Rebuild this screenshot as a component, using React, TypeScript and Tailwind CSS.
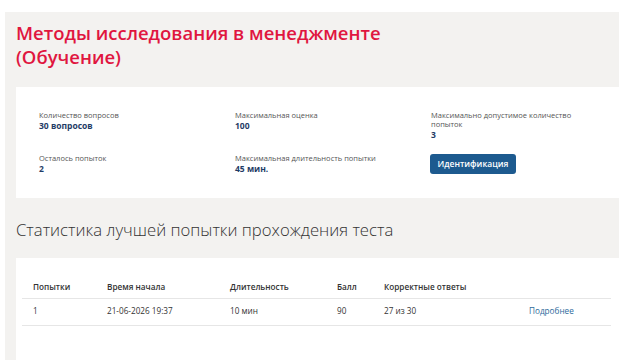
const info = [
  { label: "Количество вопросов", value: "30 вопросов" },
  { label: "Максимальная оценка", value: "100" },
  { label: "Максимально допустимое количество попыток", value: "3" },
];

const info2 = [
  { label: "Осталось попыток", value: "2" },
  { label: "Максимальная длительность попытки", value: "45 мин." },
];

const App = () => {
  return (
    <div className="bg-white pt-[12px] pl-[5px] h-[360px] overflow-hidden font-['Open_Sans',sans-serif]">
      <div className="bg-[#f3f2f0] pl-[11px] h-[348px]">
        <h1 className="pt-[9px] text-[18.5px] leading-[24px] font-semibold text-[#e0163f]">
          Методы исследования в менеджменте
          <br />
          (Обучение)
        </h1>

        <div className="mt-[18px] bg-white h-[111px] pl-[23px] pt-[24px]">
          <div className="flex">
            {info.map((item) => (
              <div className="w-[196px] shrink-0 pr-[50px]" key={item.label}>
                <p className="text-[7.5px] leading-[9px] text-[#555]">{item.label}</p>
                <p className="text-[8.5px] leading-[11px] font-bold text-[#1f3c66]">{item.value}</p>
              </div>
            ))}
          </div>
          <div className="flex mt-[14px]">
            {info2.map((item) => (
              <div className="w-[196px] shrink-0" key={item.label}>
                <p className="text-[7.5px] leading-[9px] text-[#555]">{item.label}</p>
                <p className="text-[8.5px] leading-[11px] font-bold text-[#1f3c66]">{item.value}</p>
              </div>
            ))}
            <button className="-ml-[1px] h-[20px] w-[86px] shrink-0 rounded-[3px] bg-[#1d5a8f] text-white text-[8.5px] font-semibold">
              Идентификация
            </button>
          </div>
        </div>

        <h2 className="mt-[20px] text-[16.7px] leading-[24px] font-light text-[#333]">
          Статистика лучшей попытки прохождения теста
        </h2>

        <div className="mt-[16px] bg-white h-[120px] pl-[6px] pr-[8px] pt-[21px]">
          <table className="w-full table-fixed text-[8.2px] text-[#333] border-collapse">
            <thead>
              <tr className="border-b border-[#e6e6e6]">
                <th className="text-left font-semibold pl-[11px] w-[85px] h-[19px] pb-[3px]">Попытки</th>
                <th className="text-left font-semibold w-[123px] pb-[3px]">Время начала</th>
                <th className="text-left font-semibold w-[107px] pb-[3px]">Длительность</th>
                <th className="text-left font-semibold w-[47px] pb-[3px]">Балл</th>
                <th className="text-left font-semibold w-[145px] pb-[3px]">Корректные ответы</th>
                <th></th>
              </tr>
            </thead>
            <tbody>
              <tr className="border-b border-[#e6e6e6]">
                <td className="pl-[11px] h-[27px]">1</td>
                <td>21-06-2026 19:37</td>
                <td>10 мин</td>
                <td>90</td>
                <td>27 из 30</td>
                <td className="text-[#2e6a9c]">Подробнее</td>
              </tr>
            </tbody>
          </table>
        </div>
      </div>
    </div>
  );
};

export default App;
